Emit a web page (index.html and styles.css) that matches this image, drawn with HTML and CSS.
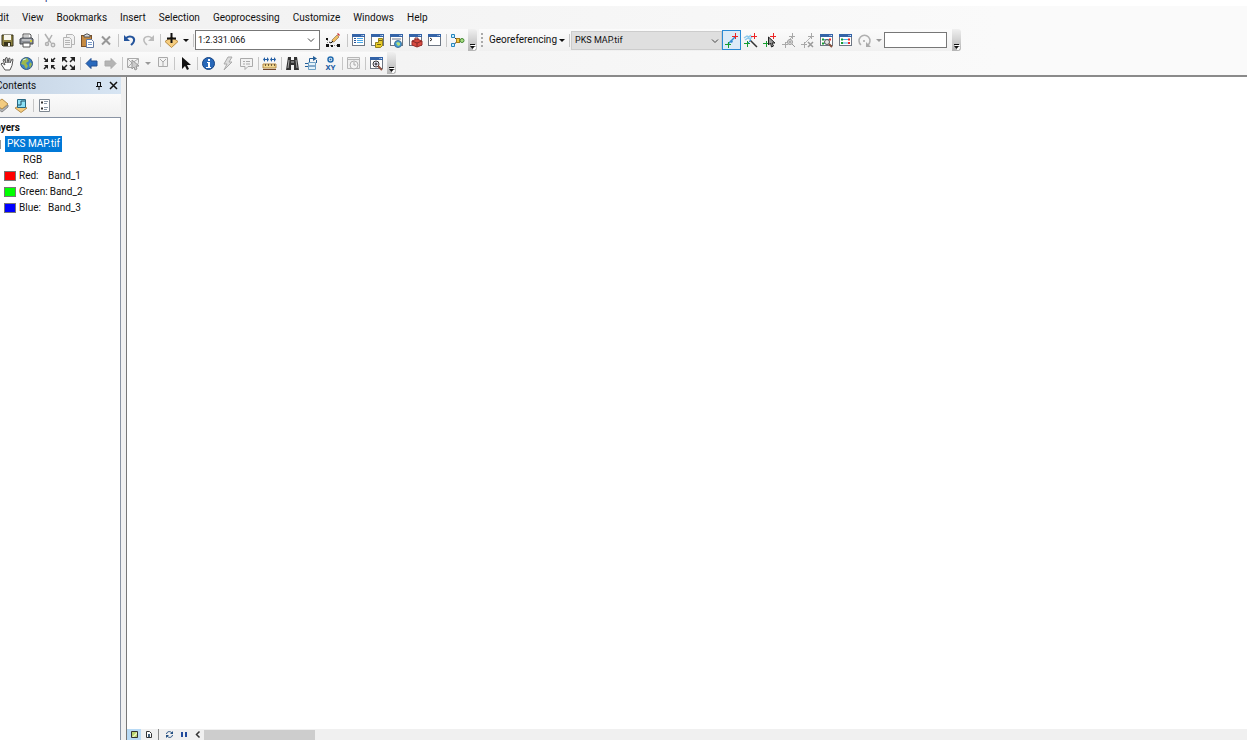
FILE: index.html
```html
<!DOCTYPE html>
<html lang="en">
<head>
  <meta charset="UTF-8">
  <meta name="viewport" content="width=device-width, initial-scale=1.0">
  <title>PKS MAP</title>
  <link rel="stylesheet" href="styles.css">
</head>
<body>
  <!-- shared icon parts -->
  <svg class="defs" aria-hidden="true">
    <symbol id="win" viewBox="0 0 15 15">
      <rect x="1.500" y="1.500" width="12" height="11" fill="#fff" stroke="#6d7683"/>
      <path d="M1 1h13v3H1z" fill="#3464a8"/>
      <path d="M10.500 2.500h1M12 2.500h1" stroke="#d9e6f7"/>
    </symbol>
    <symbol id="link" viewBox="0 0 15 15">
      <path d="m4 11 3-3 4-4" fill="none" stroke="#b4b4b4"/>
      <path d="M1 11.500h6M4.500 9v6M8 3.500h6M11.500 0v6" stroke="#a8a8a8"/>
    </symbol>
    <symbol id="chevron" viewBox="0 0 8 6">
      <path d="M1 1.500 4 4.500 7 1.500" fill="none" stroke="#444"/>
    </symbol>
    <symbol id="overflow" viewBox="0 0 7 7">
      <path d="M2 2.500h5M3 4.500h4L5 7z" fill="#fff" stroke="#fff"/>
      <path d="M1 1.500h5" stroke="#111"/>
      <path d="M1 3h5L3.500 6z" fill="#111"/>
    </symbol>
  </svg>

  <div class="app">
    <header class="titlebar"><span>p</span></header>

    <div class="bars">
      <nav class="menu">
        <button>Edit</button>
        <button>View</button>
        <button>Bookmarks</button>
        <button>Insert</button>
        <button>Selection</button>
        <button>Geoprocessing</button>
        <button>Customize</button>
        <button>Windows</button>
        <button>Help</button>
      </nav>

      <div class="bar-row">
        <!-- standard toolbar -->
        <div class="toolbar first">
          <button class="tool" aria-label="Save"><svg viewBox="0 0 15 15"><path d="M2 2h11v11H3l-1-1z" fill="#8c8140" stroke="#37331c"/><path d="M4 2h7v5H4z" fill="#f8f7ef"/><path d="M4 9h7v4H4z" fill="#37331c"/><path d="M8 10h2v3H8z" fill="#eee"/></svg></button>
          <button class="tool" aria-label="Print"><svg viewBox="0 0 15 15"><path d="M4 5V1h7l1 1v3" fill="#fff" stroke="#555"/><path d="M5 3h5" stroke="#999"/><path d="M1 6l2-1h10l1 1v5H1z" fill="#8d9198" stroke="#44484e"/><path d="M3 7h9" stroke="#eee"/><path d="M4 10h7v4H4z" fill="#fff" stroke="#555"/><path d="M11 8h2" stroke="#d2ce3c" stroke-width="2"/></svg></button>
          <span class="sep"></span>
          <button class="tool" aria-label="Cut"><svg viewBox="0 0 15 15" fill="none" stroke="#b0b0b0" stroke-width="1.500"><path d="M3 1l6 9M10 2 6 9"/><circle cx="5" cy="11" r="1.500"/><circle cx="11" cy="12" r="1.700"/></svg></button>
          <button class="tool" aria-label="Copy"><svg viewBox="0 0 15 15" fill="#f1f1f1" stroke="#b4b4b4"><path d="M5.500 1.500h6l2 2v8h-8z"/><path d="M2.500 4.500h6l2 2v8h-8z"/><path d="M4 7.500h5M4 9.500h5M4 11.500h5"/></svg></button>
          <button class="tool" aria-label="Paste"><svg viewBox="0 0 15 15"><rect x="1.500" y="2.500" width="10" height="11" fill="#c58a42" stroke="#77502a"/><path d="M4 4V2h1l1-1h2l1 1h1v2z" fill="#d6d8dc" stroke="#555"/><path d="M6.500 6.500h5l2 2v6h-7z" fill="#fff" stroke="#6179a3"/><path d="M8 9.500h4M8 11.500h4" stroke="#779bcb"/></svg></button>
          <button class="tool" aria-label="Delete"><svg viewBox="0 0 15 15"><path d="m3 3.500 8 8m0-8-8 8" fill="none" stroke="#979797" stroke-width="2"/></svg></button>
          <span class="sep"></span>
          <button class="tool" aria-label="Undo"><svg viewBox="0 0 15 15"><path d="M4 5c4-3 9-1 8 3-.500 2-2 3-3 4" fill="none" stroke="#24549c" stroke-width="2"/><path d="M2 2v6h6z" fill="#24549c"/></svg></button>
          <button class="tool" aria-label="Redo"><svg viewBox="0 0 15 15"><path d="M11 5c-4-3-9-1-8 3 .5 2 2 3 3 4" fill="none" stroke="#bbb" stroke-width="1.500"/><path d="M13 2v6H7z" fill="#bbb"/></svg></button>
          <span class="sep"></span>
          <button class="tool" aria-label="Add data"><svg viewBox="0 0 15 15"><path d="M1 8.500 7.500 4 14 8.500l-6.500 6z" fill="#f6cd7e" stroke="#b98d43"/><path d="M7.500 0v10M3 5.500h9" stroke="#111" stroke-width="2"/></svg></button>
          <button class="drop" aria-label="Add data options"></button>
          <span class="sep"></span>
          <div class="combo">
            <input type="text" value="1:2.331.066" aria-label="Map scale">
            <button aria-label="Scale list"><svg class="chev"><use href="#chevron"/></svg></button>
          </div>
          <button class="tool wide" aria-label="Editor toolbar"><svg viewBox="0 0 15 15"><path d="M2.500 5v7.500H13" fill="none" stroke="#888" stroke-dasharray="1 1"/><path d="M1 5h2v2H1zM1 11h3v3H1zM6 12h2v2H6zM12 11h3v3h-3z" fill="#111"/><path d="m7 7 5-5 2 2-5 5H7z" fill="#efbd61" stroke="#6b5330" stroke-width=".5"/><path d="m12 1 1-1 2 2-1 1z" fill="#c33"/><path d="m4 9 2 1 2-2" fill="none" stroke="#111"/></svg></button>
          <span class="sep"></span>
          <button class="tool" aria-label="Table of contents"><svg viewBox="0 0 15 15"><use href="#win"/><path d="M3 5.500h2M3 7.500h2M3 9.500h2" stroke="#26549a"/><path d="M6 5.500h6M6 7.500h6M6 9.500h6" stroke="#4aa8e8"/></svg></button>
          <button class="tool" aria-label="Catalog"><svg viewBox="0 0 15 15"><use href="#win"/><path d="M5.500 9.500h3v-4h4v7l-2 2h-5z" fill="#e8cc2a" stroke="#94811d"/><path d="M9 7.500h3M7 11.500h4" stroke="#716316"/></svg></button>
          <button class="tool" aria-label="Search"><svg viewBox="0 0 15 15"><use href="#win"/><path d="M3 6h9" stroke="#b5bac3" stroke-width="2"/><circle cx="9" cy="11" r="3.500" fill="#3d9cdb" stroke="#467093"/><path d="M7 10l2-1 2 1v2l-2 1z" fill="#b7df78"/></svg></button>
          <button class="tool" aria-label="Toolbox"><svg viewBox="0 0 15 15"><use href="#win"/><path d="m4 8 5-2 5 2v4l-5 2-5-2z" fill="#d84a40" stroke="#9a2f2c"/><path d="m4 8 5 2 5-2M9 10v4M7 7V5h3v2" fill="none" stroke="#842a29"/></svg></button>
          <button class="tool" aria-label="Python window"><svg viewBox="0 0 15 15"><use href="#win"/><path d="m3 5 2 1.500L3 8" fill="none" stroke="#222"/></svg></button>
          <span class="sep"></span>
          <button class="tool" aria-label="Model builder"><svg viewBox="0 0 15 15"><path d="M3 3l5 5 4-1M3 12l5-4" fill="none" stroke="#333"/><path d="M1.500 1.500h3v3h-3zM1.500 10.500h3v3h-3z" fill="#c7edff" stroke="#2685bd"/><rect x="6.500" y="5.500" width="3" height="4" fill="#f0c63e" stroke="#a67c17"/><circle cx="12" cy="7.500" r="2" fill="#a9df80" stroke="#438536"/></svg></button>
          <button class="more" aria-label="Toolbar options"><svg><use href="#overflow"/></svg></button>
        </div>

        <!-- georeferencing toolbar -->
        <div class="toolbar second">
          <span class="grip"></span>
          <button class="text-btn">Georeferencing</button>
          <span class="sep"></span>
          <div class="layer-select">
            <select aria-label="Layer"><option>PKS MAP.tif</option></select>
            <svg class="chev"><use href="#chevron"/></svg>
          </div>
          <button class="tool on" aria-label="Add control points"><svg viewBox="0 0 15 15"><path d="m4 11 7-7" fill="none" stroke="#318bd2" stroke-width="1.500"/><path d="m6 8 2-1 1 2-2 1z" fill="#318bd2"/><path d="M1 11.500h6M4.500 9v6" stroke="#169c2f"/><path d="M8 3.500h6M11.500 0v6" stroke="#ed2525"/></svg></button>
          <button class="tool" aria-label="Auto registration"><svg viewBox="0 0 15 15"><path d="m1 5 3-2 2 1 2-2M2 7l3-2 2 1 2-2" fill="none" stroke="#8cc9ec" stroke-width="1.500"/><path d="m7 7 7 7" stroke="#333" stroke-width="1.500"/><path d="m4 11 4-4" stroke="#318bd2"/><path d="M1 10.500h6M4.500 8v6" stroke="#169c2f"/><path d="M8 3.500h6M11.500 0v6" stroke="#ed2525"/></svg></button>
          <button class="tool" aria-label="Select link"><svg viewBox="0 0 15 15"><path d="M1 10.500h6M4.500 8v6" stroke="#169c2f"/><path d="M8 3.500h6M11.500 0v6" stroke="#ed2525"/><path d="M6.500 4v8l2-2 1 4 2-1-1.500-3h3z" fill="#999" stroke="#222"/></svg></button>
          <button class="tool" aria-label="Zoom to link"><svg viewBox="0 0 15 15"><use href="#link"/><circle cx="9" cy="9" r="2.500" fill="#eee" stroke="#999"/><path d="m11 11 3 3M7.500 9h3M9 7.500v3" stroke="#999"/></svg></button>
          <button class="tool" aria-label="Delete link"><svg viewBox="0 0 15 15"><use href="#link"/><path d="m8 9 5 5m0-5-5 5" stroke="#999" stroke-width="1.500"/></svg></button>
          <button class="tool" aria-label="Viewer"><svg viewBox="0 0 15 15"><use href="#win"/><path d="M5 6.500h5M5 10.500h5" stroke="#4dabe4"/><path d="M3 6.500h2M3 10.500h2" stroke="#169c2f" stroke-width="2"/><path d="M10 6.500h2" stroke="#ed2525" stroke-width="2"/><circle cx="8" cy="9" r="2.500" fill="#e4e4e4" stroke="#555"/><path d="m10 11 3 3" stroke="#844e3b" stroke-width="2"/></svg></button>
          <button class="tool" aria-label="Link table"><svg viewBox="0 0 15 15"><use href="#win"/><path d="M5 6.500h5M5 10h5" stroke="#4dabe4"/><path d="M3 6.500h2M3 10h2" stroke="#169c2f" stroke-width="2"/><path d="M10 6.500h2M10 10h2" stroke="#ed2525" stroke-width="2"/></svg></button>
          <button class="tool" aria-label="Rotate"><svg viewBox="0 0 15 15"><path d="M4 12a5.500 5.500 0 1 1 7 0" fill="none" stroke="#b0b0b0" stroke-width="1.500"/><path d="M9 9v5h5z" fill="#aaa"/><path d="M6 7h2v2H6z" fill="#bbb"/></svg></button>
          <button class="drop off" aria-label="Rotate options"></button>
          <input class="angle" type="text" aria-label="Rotation angle">
          <button class="more" aria-label="Toolbar options"><svg><use href="#overflow"/></svg></button>
        </div>
      </div>

      <!-- tools toolbar -->
      <div class="bar-row">
        <div class="toolbar first">
          <button class="tool" aria-label="Pan"><svg viewBox="0 0 15 15"><path d="M5 14 1 8l1-1 3 2-2-5 1-1 2 4-.500-5L7 1.500 8 7l1-5 1 .5V7l2-4 1 .5-1 6-2 4.500z" fill="#fff" stroke="#555"/></svg></button>
          <button class="tool" aria-label="Full extent"><svg viewBox="0 0 15 15"><circle cx="7.500" cy="7.500" r="6" fill="#3c83c7" stroke="#315884"/><path d="M4 3l4-1 2 3-3 2 2 3-2 3-2-4-3-1zM11 6l2 2-2 4-1-3z" fill="#9cb84d"/><path d="M4 4l3-1" stroke="#d8ecf9"/></svg></button>
          <span class="sep"></span>
          <button class="tool" aria-label="Fixed zoom in"><svg viewBox="0 0 15 15"><path d="m2 2 3 3m8-3-3 3M2 13l3-3m8 3-3-3" stroke="#222" stroke-width="1.500"/><path d="M6 2v4H2zM9 2v4h4zM6 13V9H2zM9 13V9h4z" fill="#222"/></svg></button>
          <button class="tool" aria-label="Fixed zoom out"><svg viewBox="0 0 15 15"><path d="m3 3 3 3m6-3L9 6m-6 6 3-3m6 3L9 9" stroke="#222" stroke-width="1.500"/><path d="M1 1h5L1 6zM14 1H9l5 5zM1 14h5L1 9zM14 14H9l5-5z" fill="#222"/></svg></button>
          <span class="sep"></span>
          <button class="tool" aria-label="Previous extent"><svg viewBox="0 0 15 15"><path d="m2 7.500 5-5V5h6v5H7v2.500z" fill="#2869bd" stroke="#214e91"/></svg></button>
          <button class="tool" aria-label="Next extent"><svg viewBox="0 0 15 15"><path d="m13 7.500-5-5V5H2v5h6v2.500z" fill="#b4b4b4" stroke="#aaa"/></svg></button>
          <span class="sep"></span>
          <button class="tool" aria-label="Select features"><svg viewBox="0 0 15 15"><path d="M1.500 2.500h11v4l-2 5h-9zM2 3l4 4 6-4M2 11l4-4" fill="#eee" stroke="#aaa"/><path d="M6 4v9l2-2 1 3 2-1-1-3h3z" fill="#ccc" stroke="#999"/></svg></button>
          <button class="drop off" aria-label="Selection options"></button>
          <button class="tool" aria-label="Clear selection"><svg viewBox="0 0 15 15"><path d="M3.500 1.500h9v9h-9zM5 3l3 3 3-3M8 6v4" fill="#f2f2f2" stroke="#aaa"/></svg></button>
          <span class="sep"></span>
          <button class="tool" aria-label="Select elements"><svg viewBox="0 0 15 15"><path d="M4 1v12l3-3 2 4 2-1-2-4h4z" fill="#111"/></svg></button>
          <span class="sep"></span>
          <button class="tool" aria-label="Identify"><svg viewBox="0 0 15 15"><circle cx="7.500" cy="7.500" r="6" fill="#2768b9" stroke="#174381"/><path d="M7 3h2v2H7zM6 6h3v5h1v1H5v-1h2V7H6z" fill="#fff"/></svg></button>
          <button class="tool" aria-label="Hyperlink"><svg viewBox="0 0 15 15"><path d="M8 1h4L9 6h3l-8 8 3-6H4z" fill="#ddd" stroke="#aaa"/></svg></button>
          <button class="tool" aria-label="HTML popup"><svg viewBox="0 0 15 15"><path d="M1.500 2.500h12v8H9l-3 3v-3H1.500z" fill="#f2f2f2" stroke="#aaa"/><path d="M4 5.500h2M7 5.500h4M4 8h2M7 8h4" stroke="#aaa"/></svg></button>
          <span class="sep"></span>
          <button class="tool" aria-label="Measure"><svg viewBox="0 0 15 15"><path d="M2 3.500h4M9 3.500h4" stroke="#205ca3"/><path d="M1 3.500 3 1v5zM7 3.500 5 1v5zM8 3.500 10 1v5zM14 3.500 12 1v5z" fill="#205ca3"/><path d="M1 8h13v4H1z" fill="#f0d791" stroke="#b78d49"/><path d="M3.500 8v2M6.500 8v2M9.500 8v2M12.500 8v2" stroke="#705a38"/><path d="M1 13.500h13" stroke="#70462b"/></svg></button>
          <span class="sep"></span>
          <button class="tool" aria-label="Find"><svg viewBox="0 0 15 15"><path d="M3 1h3v3h3V1h3l2 13H9V9H6v5H1z" fill="#333"/><path d="M4 4 3 12M11 4l1 8" stroke="#aaa"/><path d="M6 5h3v2H6z" fill="#777"/></svg></button>
          <button class="tool" aria-label="Find route"><svg viewBox="0 0 15 15"><path d="M4.500 6.500h7v7h-7z" fill="#e3f2fa" stroke="#6fa0c4"/><path d="M5 10h6M5.500 6V2.500H9M1 7.500h3M1 10.500h3" fill="none" stroke="#245f99"/><path d="m9 0 4 2.500L9 5z" fill="#245f99"/><path d="M12.500 4v3" stroke="#245f99"/></svg></button>
          <button class="tool" aria-label="Go to XY"><svg viewBox="0 0 15 15"><circle cx="7.500" cy="3.500" r="2.500" fill="#fff" stroke="#236caf" stroke-width="1.500"/><circle cx="7.500" cy="3.500" r="1" fill="#236caf"/><text x="7.500" y="14" text-anchor="middle" class="xy">XY</text></svg></button>
          <span class="sep"></span>
          <button class="tool" aria-label="Time slider"><svg viewBox="0 0 15 15"><path d="M1.500 1.500h12v11h-12zM2 3.500h11" fill="#eee" stroke="#b7b7b7"/><circle cx="8" cy="9" r="4" fill="#f4f4f4" stroke="#b2b2b2"/><path d="M8 6v3h2" fill="none" stroke="#aaa"/></svg></button>
          <span class="sep"></span>
          <button class="tool" aria-label="Create viewer window"><svg viewBox="0 0 15 15"><use href="#win"/><circle cx="7" cy="8" r="3" fill="#eef" stroke="#333"/><path d="M5.500 8h3M7 6.500v3" stroke="#222"/><path d="m9 10 4 4" stroke="#8d5142" stroke-width="2"/></svg></button>
          <button class="more" aria-label="Toolbar options"><svg><use href="#overflow"/></svg></button>
        </div>
      </div>
    </div>

    <main class="work">
      <aside class="toc">
        <div class="toc-title">
          <span>Contents</span>
          <button aria-label="Pin"><svg viewBox="0 0 9 9"><path d="M2.500 1v4M2 1.500h4M5.500 1v4M1 5.500h6M4 6v3" fill="none" stroke="#111"/></svg></button>
          <button aria-label="Close"><svg viewBox="0 0 9 9"><path d="m1 1 7 7m0-7L1 8" stroke="#111" stroke-width="1.500"/></svg></button>
        </div>
        <div class="toc-tools">
          <button class="tool" aria-label="List by source"><svg viewBox="0 0 15 15"><path d="m0 9 7 5 6-5v-2l-6 4-7-4z" fill="#b4b6b9" stroke="#888"/><path d="m0 6 7-5 6 5-6 5z" fill="#f3cc80" stroke="#b68e4a"/></svg></button>
          <button class="tool" aria-label="List by visibility"><svg viewBox="0 0 15 15"><path d="m1 10 6 4.500 6-4.500-6-3z" fill="#f3cc80" stroke="#b68e4a"/><path d="M3.500 1.500h8v8h-8z" fill="#8be0f5" stroke="#286782"/><path d="M4 7h3V3h4" fill="none" stroke="#204e65"/></svg></button>
          <span class="sep"></span>
          <button class="tool" aria-label="Options"><svg viewBox="0 0 15 15"><path d="M2.500 1.500h10v12h-10z" fill="#fff" stroke="#7e8791"/><path d="M4 4.500h2M4 10.500h2" stroke="#333" stroke-width="2"/><path d="M7 3.500h4M7 5.500h3M7 9.500h4M7 11.500h3" stroke="#8a98a7"/></svg></button>
        </div>
        <div class="layers">
          <div class="row group">Layers</div>
          <div class="row"><span class="node"></span><span class="picked">PKS MAP.tif</span></div>
          <div class="row rgb">RGB</div>
          <div class="row band"><i class="red"></i><span>Red:</span><span>Band_1</span></div>
          <div class="row band"><i class="green"></i><span>Green:</span><span>Band_2</span></div>
          <div class="row band"><i class="blue"></i><span>Blue:</span><span>Band_3</span></div>
        </div>
      </aside>

      <section class="view">
        <div class="map"></div>
        <div class="view-bar">
          <button class="on" aria-label="Data view"><svg viewBox="0 0 9 9"><path d="M1.500 1.500h6v6h-6z" fill="#b9d36f" stroke="#333"/><path d="m2 7 5-5v2L4 7z" fill="#eef7c1"/></svg></button>
          <button aria-label="Layout view"><svg viewBox="0 0 9 9"><path d="M2.500 1.500h3l2 2v4h-5z" fill="#fff" stroke="#333"/><path d="M4 4h2v3H4z" fill="#47617b"/></svg></button>
          <span class="sep"></span>
          <button aria-label="Refresh"><svg viewBox="0 0 9 9"><path d="M1.500 4c.5-3 4-3 5.500-1M7.500 5C7 8 3.500 8 2 6" fill="none" stroke="#244f82"/><path d="M8 1v3H5zM1 8V5h3z" fill="#244f82"/></svg></button>
          <button aria-label="Pause drawing"><svg viewBox="0 0 9 9"><path d="M2 2h2v5H2zM6 2h2v5H6z" fill="#234b9c"/></svg></button>
          <button aria-label="Scroll left"><svg viewBox="0 0 9 9"><path d="M6.500 1.500 3.500 4.500l3 3" fill="none" stroke="#333" stroke-width="1.500"/></svg></button>
          <div class="track"><div class="thumb"></div></div>
        </div>
      </section>
    </main>
  </div>
</body>
</html>
```

FILE: styles.css
```css
* {
  box-sizing: border-box;
}
body {
  margin: 0;
  background: #fff;
  color: #111;
  font-family: Roboto, "Open Sans", sans-serif;
  font-size: 10px;
  line-height: 16px;
}
button, input, select {
  margin: 0;
  padding: 0;
  border: 0;
  background: none;
  color: inherit;
  font: inherit;
}
svg {
  display: block;
  flex: none;
}
.defs {
  position: absolute;
  width: 0;
  height: 0;
}
.app {
  display: flex;
  flex-direction: column;
  height: 100vh;
  overflow: hidden;
}
.titlebar {
  display: flex;
  align-items: flex-end;
  height: 6px;
  flex: none;
  padding: 0 0 5px 45px;
  overflow: hidden;
  color: #23307c;
  line-height: 8px;
}

/* menu and toolbars */
.bars {
  flex: none;
  background: linear-gradient(90deg, #f0f0f0, #f5f5f5 40%, #fafafa 80%);
  border-bottom: 2px solid #777;
  border-bottom-color: #8a8a8a;
}
.menu {
  display: flex;
  gap: 13px;
  height: 23px;
  margin-left: -8px;
  align-items: center;
}
.bar-row {
  display: flex;
  gap: 2px;
  height: 22px;
  margin-bottom: 1px;
}
.toolbar {
  display: flex;
  align-items: center;
  background: linear-gradient(#fbfbfb, #f0f0f0);
  border-radius: 0 3px 3px 0;
}
.toolbar.first {
  margin-left: -2px;
}
.tool {
  display: flex;
  align-items: center;
  justify-content: center;
  flex: none;
  width: 19px;
  height: 20px;
}
.tool svg {
  width: 15px;
  height: 15px;
}
.tool.wide {
  width: 25px;
}
.tool.on {
  border: 1px solid #2a8ad4;
  background: #dcebf7;
}
.sep {
  flex: none;
  width: 1px;
  height: 13px;
  margin: 0 1px 0 2px;
  background: #c6c6c6;
}
.drop {
  flex: none;
  width: 10px;
  height: 20px;
  padding: 0 2px;
}
.drop::before,
.text-btn::after {
  content: "";
  display: block;
  border: 3px solid transparent;
  border-top-color: #111;
  border-bottom: 0;
  width: 0;
}
.drop.off::before {
  border-top-color: #999;
}
.combo {
  display: flex;
  width: 125px;
  height: 20px;
  border: 1px solid #777;
  background: #fff;
}
.combo input {
  flex: 1;
  min-width: 0;
  padding-left: 2px;
  font-size: 9px;
}
.combo button {
  width: 12px;
}
.chev {
  width: 8px;
  height: 6px;
}
.more {
  display: flex;
  align-items: flex-end;
  justify-content: center;
  width: 9px;
  height: 22px;
  margin-left: 1px;
  padding-bottom: 1px;
  background: linear-gradient(#f0f0f0, #b4b4b4);
  border-radius: 0 3px 3px 0;
}
.more svg {
  width: 7px;
  height: 7px;
}
.grip {
  width: 2px;
  height: 14px;
  margin: 0 6px 0 2px;
  background: repeating-linear-gradient(#aaa 0 2px, transparent 2px 4px);
}
.text-btn {
  display: flex;
  align-items: center;
  gap: 2px;
  margin-right: 2px;
}
.layer-select {
  position: relative;
  width: 151px;
  height: 19px;
}
.layer-select select {
  appearance: none;
  width: 100%;
  height: 100%;
  padding-left: 3px;
  background: #dfdfdf;
  border: 1px solid #ccc;
  border-radius: 0;
  font-size: 9px;
}
.layer-select .chev {
  position: absolute;
  right: 3px;
  top: 7px;
  pointer-events: none;
}
.angle {
  width: 63px;
  height: 16px;
  margin-right: 4px;
  border: 1px solid #777;
  background: #fff;
}
.xy {
  fill: #205ca3;
  font-size: 8px;
  font-weight: 700;
}

/* table of contents */
.work {
  display: flex;
  flex: 1;
  min-height: 0;
  background: #f0f0f0;
}
.toc {
  display: flex;
  flex-direction: column;
  flex: none;
  width: 121px;
  overflow: hidden;
}
.toc-title {
  display: flex;
  align-items: center;
  gap: 5px;
  height: 17px;
  padding-right: 3px;
  margin-left: -4px;
  background: linear-gradient(90deg, #c6d4e4, #d7e5f3);
}
.toc-title span {
  flex: 1;
}
.toc-title svg {
  width: 9px;
  height: 9px;
}
.toc-tools {
  display: flex;
  align-items: center;
  height: 23px;
  margin-left: -7px;
  background: linear-gradient(#fbfbfb, #f0f0f0);
}
.layers {
  flex: 1;
  padding-top: 2px;
  background: #fff;
  border: 1px solid #8993a3;
  border-left: 0;
  border-bottom: 0;
}
.row {
  display: flex;
  align-items: center;
  height: 16px;
}
.group {
  margin-left: -10px;
  font-weight: 700;
}
.node {
  width: 1px;
  height: 9px;
  margin-right: 4px;
  background: #999;
}
.picked {
  padding: 0 2px;
  background: #0078d7;
  color: #fff;
}
.rgb {
  padding-left: 23px;
}
.band {
  padding-left: 4px;
}
.band i {
  width: 12px;
  height: 10px;
  margin-right: 3px;
  border: 1px solid #777;
}
.band span:nth-child(2) {
  min-width: 27px;
  margin-right: 2px;
}
.red {
  background: #f00;
}
.green {
  background: #0f0;
}
.blue {
  background: #00f;
}

/* map view */
.view {
  display: flex;
  flex-direction: column;
  flex: 1;
  min-width: 0;
  margin-left: 5px;
  border-left: 1px solid #777;
}
.map {
  flex: 1;
  background: #fff;
}
.view-bar {
  display: flex;
  align-items: center;
  height: 11px;
  flex: none;
  background: #f0f0f0;
}
.view-bar button {
  display: flex;
  align-items: center;
  justify-content: center;
  width: 14px;
  height: 11px;
}
.view-bar .on {
  background: #b8daf5;
}
.view-bar svg {
  width: 9px;
  height: 9px;
}
.view-bar .sep {
  height: 11px;
  margin: 0 3px;
  background: #888;
}
.track {
  flex: 1;
  height: 10px;
}
.thumb {
  width: 111px;
  height: 10px;
  background: #cdcdcd;
}
```
